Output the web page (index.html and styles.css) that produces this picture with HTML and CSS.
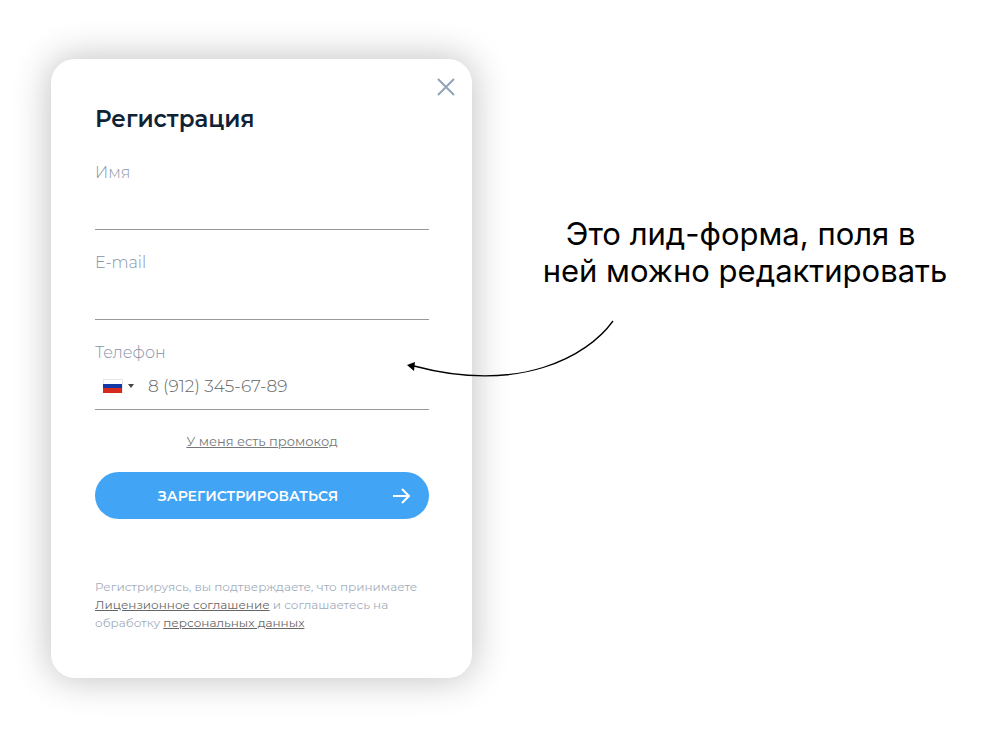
FILE: index.html
```html
<!DOCTYPE html>
<html lang="ru">
<head>
	<meta charset="UTF-8">
	<meta name="viewport" content="width=device-width, initial-scale=1">
	<title>Регистрация</title>
	<link rel="stylesheet" href="styles.css">
</head>
<body>
	<main class="page">
		<form class="card">
			<button type="button" class="close" aria-label="Закрыть">
				<svg width="18" height="18" viewBox="0 0 18 18"><path d="M1 1L17 17M17 1L1 17"/></svg>
			</button>
			<h1 class="title">Регистрация</h1>
			<div class="fields">
				<div class="field">
					<label for="name">Имя</label>
					<div class="control"><input type="text" id="name"></div>
				</div>
				<div class="field">
					<label for="email">E-mail</label>
					<div class="control"><input type="email" id="email"></div>
				</div>
				<div class="field">
					<label for="phone">Телефон</label>
					<div class="control">
						<button type="button" class="country" aria-label="Код страны">
							<svg class="flag" width="20" height="14" viewBox="0 0 20 14">
								<rect width="20" height="14" rx="1" fill="#e6e6e6"/>
								<rect x="1" y="1" width="18" height="4" fill="#fff"/>
								<rect x="0" y="5" width="19" height="5" fill="#1238a5"/>
								<rect x="0" y="9" width="19" height="5" fill="#d62a20"/>
							</svg>
							<span class="caret"></span>
						</button>
						<input type="tel" id="phone" placeholder="8 (912) 345-67-89">
					</div>
				</div>
			</div>
			<a href="#" class="promo">У меня есть промокод</a>
			<button type="submit" class="submit">
				<span>Зарегистрироваться</span>
				<svg width="18" height="16" viewBox="0 0 18 16"><path d="M0 8H16M9 1L16 8L9 15"/></svg>
			</button>
			<p class="legal">Регистрируясь, вы подтверждаете, что принимаете <br><a href="#">Лицензионное соглашение</a> и соглашаетесь на<br>обработку <a href="#">персональных данных</a></p>
		</form>
		<aside class="note">
			<p>Это лид-форма, поля в&nbsp;<br>ней можно редактировать</p>
			<svg class="arrow" width="210" height="60" viewBox="0 0 210 60">
				<path class="line" d="M206 1C180 37 112 74 7 46"/>
				<path d="M0 45L8 42L7 51Z"/>
			</svg>
		</aside>
	</main>
</body>
</html>
```
FILE: styles.css
```css
*{
	margin: 0;
	padding: 0;
	box-sizing: border-box;
}
body{
	background: #fff;
	font-family: Montserrat, Inter, sans-serif;
}
button, input{
	border: 0;
	background: none;
	font-family: inherit;
}
button{
	cursor: pointer;
}
.page{
	display: flex;
	align-items: flex-start;
	gap: 56px;
	padding: 59px 38px 54px 51px;
}
.card{
	position: relative;
	display: flex;
	flex-direction: column;
	flex: 0 1 421px;
	padding: 45px 43px 46px 44px;
	border-radius: 24px;
	background: #fff;
	box-shadow: 0 0 36px 2px rgba(0, 0, 0, .24);
}
.close{
	position: absolute;
	top: 19px;
	right: 17px;
	height: 18px;
	font-size: 0;
}
.close path{
	fill: none;
	stroke: #8fa3b8;
	stroke-width: 2;
}
.title{
	margin-bottom: 29px;
	font-size: 23px;
	font-weight: 600;
	line-height: 30px;
	color: #102334;
}
.fields{
	display: grid;
	gap: 23px;
}
.field{
	border-bottom: 1px solid #999;
}
.field label{
	display: block;
	font-size: 16px;
	font-weight: 300;
	line-height: 20px;
	color: #8793a6;
}
.control{
	display: flex;
	align-items: center;
	height: 46px;
}
.control input{
	flex: 1;
	min-width: 0;
	height: 100%;
	outline: 0;
	font-size: 17px;
	font-weight: 300;
	color: #333;
}
.control input::placeholder{
	color: #666;
	opacity: 1;
}
.country{
	display: flex;
	align-items: center;
	gap: 5px;
	margin-right: 14px;
	padding-left: 8px;
}
.caret{
	border-top: 4px solid #444;
	border-left: 3px solid transparent;
	border-right: 3px solid transparent;
}
.promo{
	align-self: center;
	margin: 22px 0;
	font-size: 13px;
	font-weight: 400;
	line-height: 18px;
	color: #777;
}
.submit{
	display: flex;
	align-items: center;
	height: 47px;
	padding: 0 18px 0 8px;
	border-radius: 24px;
	background: #42a4f5;
	color: #fff;
	font-size: 14px;
	font-weight: 600;
	text-transform: uppercase;
}
.submit span{
	flex: 1;
}
.submit path{
	fill: none;
	stroke: #fff;
	stroke-width: 2;
}
.legal{
	margin-top: 59px;
	font-size: 12px;
	font-weight: 400;
	line-height: 18px;
	color: #a3adbc;
}
.legal a{
	color: #666;
}
.note{
	position: relative;
	flex: 1;
	margin-top: 156px;
	font-family: Inter, sans-serif;
	font-size: 31px;
	line-height: 37px;
	color: #000;
	text-align: center;
}
.arrow{
	position: absolute;
	top: 105px;
	left: -121px;
}
.line{
	fill: none;
	stroke: #000;
	stroke-width: 1.3;
}
```
